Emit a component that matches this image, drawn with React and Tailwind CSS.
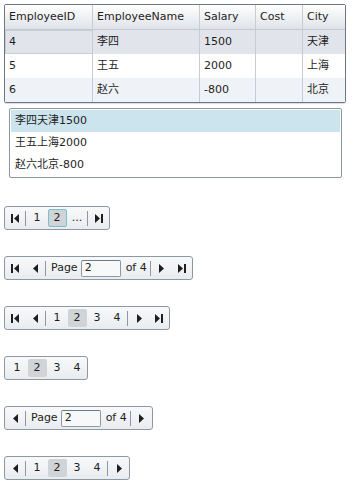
import React from 'react'

const font = { fontFamily: '"DejaVu Sans", "Noto Sans CJK SC", sans-serif' }

const rows = [
  { id: '4', name: '李四', salary: '1500', cost: '', city: '天津' },
  { id: '5', name: '王五', salary: '2000', cost: '', city: '上海' },
  { id: '6', name: '赵六', salary: '-800', cost: '', city: '北京' },
]

const cols = 'grid grid-cols-[88px_107px_56px_47px_42px]'

const First = () => (
  <svg width="8" height="9" viewBox="0 0 8 9"><rect x="0" y="0" width="2" height="9" fill="#1e1e1e" /><polygon points="8,0 3,4.5 8,9" fill="#1e1e1e" /></svg>
)
const Prev = () => (
  <svg width="5" height="9" viewBox="0 0 5 9"><polygon points="5,0 0,4.5 5,9" fill="#1e1e1e" /></svg>
)
const Next = () => (
  <svg width="5" height="9" viewBox="0 0 5 9"><polygon points="0,0 5,4.5 0,9" fill="#1e1e1e" /></svg>
)
const Last = () => (
  <svg width="8" height="9" viewBox="0 0 8 9"><polygon points="0,0 5,4.5 0,9" fill="#1e1e1e" /><rect x="6" y="0" width="2" height="9" fill="#1e1e1e" /></svg>
)

const Btn = ({ children }) => (
  <div className="w-[20px] h-full flex items-center justify-center">{children}</div>
)
const Sep = () => <div className="w-px h-[15px] bg-[#8d98a4] mr-px" />

const Num = ({ n, sel, focus }) => (
  <div className="w-[20px] h-full flex items-center justify-center">
    {sel ? (
      <div className={`w-[19px] h-[18px] rounded-[2px] bg-[#d1d4d6] flex items-center justify-center ${focus ? 'border border-[#77c0d3]' : ''}`}>{n}</div>
    ) : (
      n
    )}
  </div>
)

const PageBox = () => (
  <>
    <span className="ml-[4px]">Page</span>
    <div className="ml-[3px] w-[40px] h-[17px] border border-[#8d98a4] border-t-[#6f7984] rounded-[2px] bg-[#f7f8f9] flex items-center pl-[3px]">2</div>
    <span className="ml-[5px]">of 4</span>
    <div className="ml-[3px]"><Sep /></div>
  </>
)

const Pager = ({ children }) => (
  <div className="inline-flex h-[24px] items-center border border-[#8d98a4] rounded-[3px] bg-gradient-to-b from-[#f8f9fa] to-[#e9ecef] text-[11px] text-[#1e1e1e] self-start" style={font}>
    {children}
  </div>
)

export default function App() {
  return (
    <div className="bg-white w-[354px] h-[484px] flex flex-col pl-[4px] pt-[4px]" style={font}>
      {/* grid */}
      <div className="w-[342px] border border-[#6e7883] rounded-[2px] text-[11px] text-[#1e1e1e] shadow-[0_1px_1px_rgba(0,0,0,0.15)]">
        <div className={`${cols} h-[25px] bg-gradient-to-b from-[#ffffff] to-[#dfe3e8] border-b border-[#c3c9cf]`}>
          {['EmployeeID', 'EmployeeName', 'Salary', 'Cost', 'City'].map((h, i) => (
            <div key={h} className={`flex items-center pl-[4px] ${i < 4 ? 'border-r border-[#c6ccd2]' : ''}`}>{h}</div>
          ))}
        </div>
        {rows.map((r, ri) => (
          <div
            key={r.id}
            className={`${cols} h-[24px] ${ri === 0 ? 'bg-[#e1e5eb]' : ri === 1 ? 'bg-white' : 'bg-[#eff2f6]'}`}
          >
            {[r.id, r.name, r.salary, r.cost, r.city].map((v, i) => (
              <div
                key={i}
                className={`flex items-center ${i < 4 ? 'border-r border-[#c6ccd2]' : ''} ${ri === 0 && i === 0 ? 'border border-[#6fc0d3] pl-[3px]' : 'pl-[4px]'}`}
              >
                {v}
              </div>
            ))}
          </div>
        ))}
      </div>

      {/* list */}
      <div className="ml-[5px] mt-[5px] w-[333px] h-[70px] border border-[#8a96a2] rounded-[2px] p-px text-[11px] text-[#1e1e1e]">
        <div className="h-[22px] bg-[#cce4ee] flex items-center pl-[4px]">李四天津1500</div>
        <div className="h-[22px] flex items-center pl-[4px]">王五上海2000</div>
        <div className="h-[22px] flex items-center pl-[4px]">赵六北京-800</div>
      </div>

      <div className="mt-[28px] flex flex-col gap-[26px]">
        <Pager>
          <Btn><First /></Btn><Sep />
          <Num n="1" /><Num n="2" sel focus />
          <div className="w-[20px] text-center">...</div><Sep />
          <Btn><Last /></Btn>
        </Pager>

        <Pager>
          <Btn><First /></Btn><Btn><Prev /></Btn><Sep />
          <PageBox />
          <Btn><Next /></Btn><Btn><Last /></Btn>
        </Pager>

        <Pager>
          <Btn><First /></Btn><Btn><Prev /></Btn><Sep />
          <Num n="1" /><Num n="2" sel /><Num n="3" /><Num n="4" /><Sep />
          <Btn><Next /></Btn><Btn><Last /></Btn>
        </Pager>

        <Pager>
          <div className="w-[2px]" />
          <Num n="1" /><Num n="2" sel /><Num n="3" /><Num n="4" />
        </Pager>

        <Pager>
          <Btn><Prev /></Btn><Sep />
          <PageBox />
          <Btn><Next /></Btn>
        </Pager>

        <Pager>
          <Btn><Prev /></Btn><Sep />
          <Num n="1" /><Num n="2" sel /><Num n="3" /><Num n="4" /><Sep />
          <Btn><Next /></Btn>
        </Pager>
      </div>
    </div>
  )
}
